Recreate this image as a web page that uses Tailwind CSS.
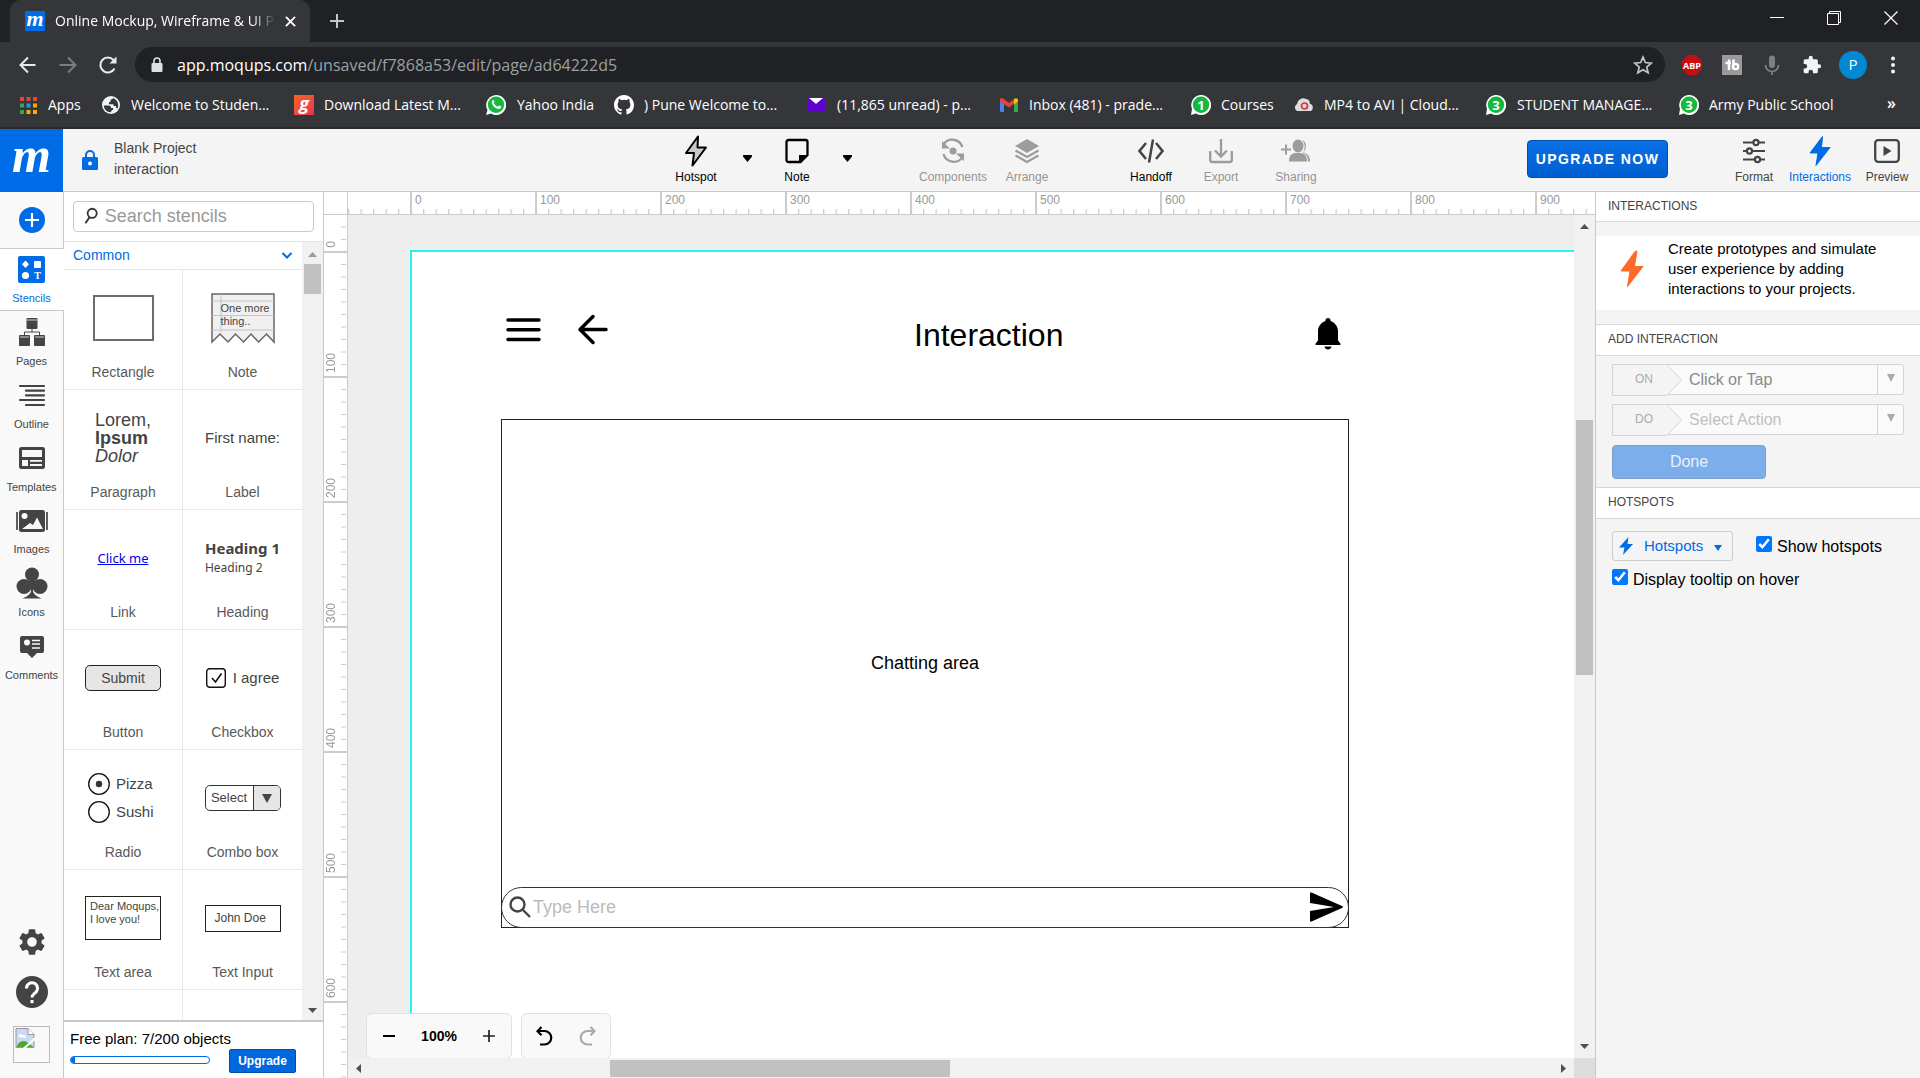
<!DOCTYPE html>
<html lang="en">
<head>
<meta charset="utf-8">
<title>Online Mockup, Wireframe &amp; UI Prototyping Tool</title>
<script src="https://cdn.jsdelivr.net/npm/@tailwindcss/browser@4"></script>
</head>
<body class="flex h-screen flex-col overflow-hidden bg-white font-['Liberation_Sans',Arial,sans-serif] text-[#444]">

<!-- Browser chrome -->
<div class="shrink-0 bg-[#35363a] font-['Open_Sans',sans-serif] text-white">
  <div class="flex h-[42px] bg-[#202124]">
    <div class="ml-[10px] flex w-[300px] items-center rounded-t-[10px] bg-[#35363a] pr-[10px] pl-[15px]">
      <div class="flex size-5 shrink-0 items-center justify-center bg-[#006be6] pb-1 font-['Liberation_Serif',serif] text-[22px] leading-none font-bold italic">m</div>
      <div class="ml-[10px] w-[220px] overflow-hidden text-[14px] leading-5 whitespace-nowrap [mask-image:linear-gradient(90deg,#000_90%,transparent)]">Online Mockup, Wireframe &amp; UI Prototyping</div>
      <button class="ml-auto flex size-5 items-center justify-center" aria-label="Close tab"><svg class="size-[11px]" viewBox="0 0 12 12" stroke="#fff" stroke-width="2"><path d="M1 1l10 10M11 1L1 11"/></svg></button>
    </div>
    <button class="ml-[19px] flex w-4 items-center" aria-label="New tab"><svg class="size-4" viewBox="0 0 16 16" stroke="#c4c5c7" stroke-width="2"><path d="M8 1v14M1 8h14"/></svg></button>
    <div class="ml-auto flex items-center gap-[43px] pr-[22px] pb-[6px]">
      <button aria-label="Minimize"><svg class="size-[14px]" viewBox="0 0 14 14" stroke="#fff"><path d="M0 6.500h14"/></svg></button>
      <button aria-label="Restore"><svg class="size-[14px]" viewBox="0 0 14 14" stroke="#fff" fill="none"><path d="M.5 2.500h11v11H.5zM2.500 2.500V.5h11v11H11.500"/></svg></button>
      <button aria-label="Close"><svg class="size-[14px]" viewBox="0 0 14 14" stroke="#fff" stroke-width="1.200"><path d="M.5.5l13 13M13.500.5l-13 13"/></svg></button>
    </div>
  </div>
  <div class="flex h-[45px] items-center">
    <button class="ml-[18px]" aria-label="Back"><svg class="size-[20px]" viewBox="0 0 20 20" fill="none" stroke="#e8eaed" stroke-width="2"><path d="M17.500 10H3M10 2.500L2.500 10l7.500 7.500"/></svg></button>
    <button class="ml-[20px]" aria-label="Forward"><svg class="size-[20px]" viewBox="0 0 20 20" fill="none" stroke="#7b7c7f" stroke-width="2"><path d="M1.500 10H17M10 2.500l7.500 7.500-7.500 7.500"/></svg></button>
    <button class="ml-[20px]" aria-label="Reload"><svg class="size-[20px]" viewBox="0 0 20 20" fill="none" stroke="#e8eaed" stroke-width="2"><path d="M16.500 13.500A7.500 7.500 0 1 1 15.500 5"/><path d="M18.500 1.500v7h-7z" fill="#e8eaed" stroke="none"/></svg></button>
    <div class="ml-[17px] flex h-[35px] flex-1 items-center rounded-full bg-[#202124] pr-3 pl-4">
      <svg class="h-4 w-3 shrink-0" viewBox="0 0 12 16"><rect x=".5" y="6" width="11" height="9" rx="1" fill="#dfe0e2"/><path d="M3 6.500V4a3 3 0 0 1 6 0v2.500" fill="none" stroke="#dfe0e2" stroke-width="1.600"/></svg>
      <div class="ml-[14px] flex-1 text-[16px] leading-6 whitespace-nowrap">app.moqups.com<span class="text-[#9aa0a6]">/unsaved/f7868a53/edit/page/ad64222d5</span></div>
      <svg class="size-5" viewBox="0 0 24 24" fill="none" stroke="#c4c6c9" stroke-width="2"><path d="M12 2.500l2.800 6.600 7.200.6-5.500 4.700 1.700 7L12 17.700 5.800 21.400l1.700-7L2 9.700l7.200-.6z"/></svg>
    </div>
    <div class="flex items-center gap-5 pr-[21px] pl-[17px]">
      <svg class="size-[20px]" viewBox="0 0 20 20"><path d="M6 0h8l6 6v8l-6 6H6l-6-6V6z" fill="#c70d0d"/><text x="10" y="13.500" font-family="Open Sans" font-size="9" font-weight="700" fill="#fff" text-anchor="middle">ABP</text></svg>
      <svg class="size-5" viewBox="0 0 20 20"><path d="M0 0h20v20H0z" fill="#9a9a9a"/><path d="M7 4.500V15M3.500 8H9M11.500 4.500V14" stroke="#fff" stroke-width="2.500"/><circle cx="13.500" cy="11.500" r="2.700" fill="none" stroke="#fff" stroke-width="2.300"/></svg>
      <svg class="size-5" viewBox="0 0 20 20" fill="none" stroke="#7e7f82"><path d="M10 3.500v6.500" stroke-width="6" stroke-linecap="round"/><path d="M3.500 10a6.500 6.500 0 0 0 13 0M10 16v4" stroke-width="1.700"/></svg>
      <svg class="size-[20px]" viewBox="0 0 24 24" fill="#f1f3f4"><path d="M20.500 11H19V7a2 2 0 0 0-2-2h-4V3.500a2.500 2.500 0 0 0-5 0V5H4a2 2 0 0 0-2 2v3.800h1.500a2.700 2.700 0 0 1 0 5.400H2V20a2 2 0 0 0 2 2h3.800v-1.500a2.700 2.700 0 0 1 5.400 0V22H17a2 2 0 0 0 2-2v-4h1.500a2.500 2.500 0 0 0 0-5z"/></svg>
      <div class="-ml-[3px] flex size-7 items-center justify-center rounded-full bg-[#0288d1] text-[15px]">P</div>
      <svg class="h-5 w-[12px]" viewBox="0 0 12 20" fill="#f1f3f4"><circle cx="6" cy="3.500" r="2"/><circle cx="6" cy="10" r="2"/><circle cx="6" cy="16.500" r="2"/></svg>
    </div>
  </div>
  <nav class="flex h-[42px] items-center border-b-2 border-[#28292c] pb-1 pl-5 text-[14px] leading-5 whitespace-nowrap">
    <a href="#" class="flex w-[82px] shrink-0 items-center gap-[11px]"><svg class="size-[17px] shrink-0" viewBox="0 0 17 17"><path d="M0 0h4v4H0zM6.500 0h4v4h-4zM13 0h4v4h-4z" fill="#ea4335"/><path d="M0 6.500h4v4H0zM0 13h4v4H0z" fill="#34a853"/><path d="M6.500 6.500h4v4h-4z" fill="#2196f3"/><path d="M13 6.500h4v4h-4zM6.500 13h4v4h-4zM13 13h4v4h-4z" fill="#fbaa05"/></svg>Apps</a>
    <a href="#" class="flex w-[192px] shrink-0 items-center gap-[11px]"><svg class="size-[18px] shrink-0" viewBox="0 0 18 18"><circle cx="9" cy="9" r="9" fill="#f1f3f4"/><path d="M1.800 9.500h4.500c2 0 3 1 2.700 2.500H11v2c-1 0-2 .5-2 2.200C5 16.500 2 13.500 1.800 9.500zM11 2c-.5 1-1 1.500-2.500 1.500V6H7v2.200h4.500V10H14v1.500l1.500 1.200C17 10 16.500 4 11 2z" fill="#35363a"/></svg>Welcome to Studen...</a>
    <a href="#" class="flex w-[192px] shrink-0 items-center gap-[10px]"><span class="flex size-5 shrink-0 items-center justify-center bg-linear-to-br from-[#f26522] to-[#e8334a] pb-1 text-[18px] leading-none font-bold italic">g</span>Download Latest M...</a>
    <a href="#" class="flex w-[128px] shrink-0 items-center gap-[11px]"><svg class="size-5 shrink-0" viewBox="0 0 20 20"><path d="M0 20l1.500-5A10 10 0 1 1 5 18.600z" fill="#fff"/><circle cx="10" cy="9.800" r="8.200" fill="#14b83f"/><path d="M6 6c1-2 2-1 2.500.8.2.9-1 1-.5 1.800 1 1.700 2 2.500 3.400 3 .8.300 1-1.200 1.800-1 2 .8 2.500 1.200 1.500 2.600C11 16 4.500 9.500 6 6z" fill="#fff"/></svg>Yahoo India</a>
    <a href="#" class="flex w-[193px] shrink-0 items-center gap-[10px]"><svg class="size-5 shrink-0" viewBox="0 0 16 16" fill="#fff"><path d="M8 0C3.580 0 0 3.580 0 8c0 3.540 2.290 6.530 5.470 7.590.4.070.55-.17.55-.38 0-.19-.01-.82-.01-1.490-2.010.37-2.530-.49-2.690-.94-.09-.23-.48-.94-.82-1.130-.28-.15-.68-.52-.01-.53.63-.01 1.080.58 1.230.82.72 1.210 1.870.87 2.330.66.07-.52.28-.87.51-1.070-1.780-.2-3.640-.89-3.640-3.950 0-.87.31-1.590.82-2.150-.08-.2-.36-1.020.08-2.120 0 0 .67-.21 2.200.82a7.600 7.600 0 0 1 4 0c1.530-1.040 2.200-.82 2.200-.82.44 1.100.16 1.920.08 2.120.51.56.82 1.270.82 2.150 0 3.070-1.870 3.750-3.650 3.950.29.25.54.73.54 1.480 0 1.070-.01 1.930-.01 2.200 0 .21.150.46.55.38A8.010 8.010 0 0 0 16 8c0-4.420-3.580-8-8-8z"/></svg>) Pune Welcome to...</a>
    <a href="#" class="flex w-[193px] shrink-0 items-center gap-[12px]"><svg class="h-[14px] w-[18px] shrink-0" viewBox="0 0 18 14"><rect width="18" height="14" rx="1.500" fill="#6001d2"/><path d="M2 0h14L9 6z" fill="#fff"/></svg>(11,865 unread) - p...</a>
    <a href="#" class="flex w-[191px] shrink-0 items-center gap-[11px]"><svg class="h-[14px] w-[18px] shrink-0" viewBox="0 0 18 14"><path d="M0 2h4v12H1a1 1 0 0 1-1-1z" fill="#4285f4"/><path d="M14 2h4v11a1 1 0 0 1-1 1h-3z" fill="#34a853"/><path d="M0 2C0 0 2-.5 3.500.7L9 5l5.500-4.300L14 5.800 9 9.500 0 3.500z" fill="#ea4335"/><path d="M14 1c2-1.500 4-.7 4 1v1.500l-4 3z" fill="#fbbc04"/></svg>Inbox (481) - prade...</a>
    <a href="#" class="flex w-[104px] shrink-0 items-center gap-[10px]"><svg class="size-5 shrink-0" viewBox="0 0 20 20"><path d="M0 20l1-6A10 10 0 1 1 5 18.600z" fill="#fff"/><circle cx="10" cy="9.800" r="8.200" fill="#14b83f"/><text x="10" y="14.500" font-family="Open Sans" font-size="13" font-weight="700" fill="#fff" text-anchor="middle">1</text></svg>Courses</a>
    <a href="#" class="flex w-[191px] shrink-0 items-center gap-[11px]"><svg class="h-[14px] w-[18px] shrink-0" viewBox="0 0 18 14"><path d="M2 13a4 4 0 0 1 0-7C3 1 8-1 11 1c3 0 4 3 4 5 3 0 4 5 1 7z" fill="#ddd"/><circle cx="9.500" cy="8" r="3" fill="none" stroke="#d33" stroke-width="1.700"/></svg>MP4 to AVI | Cloud...</a>
    <a href="#" class="flex w-[193px] shrink-0 items-center gap-[11px]"><svg class="size-5 shrink-0" viewBox="0 0 20 20"><path d="M0 20l1-6A10 10 0 1 1 5 18.600z" fill="#fff"/><circle cx="10" cy="9.800" r="8.200" fill="#14b83f"/><text x="10" y="14.500" font-family="Open Sans" font-size="13" font-weight="700" fill="#fff" text-anchor="middle">3</text></svg>STUDENT MANAGE...</a>
    <a href="#" class="flex shrink-0 items-center gap-[10px]"><svg class="size-5 shrink-0" viewBox="0 0 20 20"><path d="M0 20l1-6A10 10 0 1 1 5 18.600z" fill="#fff"/><circle cx="10" cy="9.800" r="8.200" fill="#14b83f"/><text x="10" y="14.500" font-family="Open Sans" font-size="13" font-weight="700" fill="#fff" text-anchor="middle">3</text></svg>Army Public School</a>
    <button class="mr-6 ml-auto pb-1 text-[16px] font-semibold" aria-label="More bookmarks">»</button>
  </nav>
</div>

<!-- Application header -->
<header class="flex h-[63px] shrink-0 border-b border-[#c9c9c9] bg-[#f4f4f4] text-[12px] leading-4">
  <div class="flex flex-1">
    <a href="#" class="-mb-px flex w-[63px] items-center justify-center bg-[#006be6] pb-3 font-['Liberation_Serif',serif] text-[50px] leading-none font-bold text-white italic" aria-label="Moqups">m</a>
    <svg class="mt-[21px] ml-[19px] h-[20px] w-4" viewBox="0 0 16 20"><rect y="7" width="16" height="13" rx="1.500" fill="#006be6"/><path d="M4 7.500V5a4 4 0 0 1 8 0v2.500" fill="none" stroke="#006be6" stroke-width="2"/><circle cx="8" cy="13.500" r="2" fill="#fff"/></svg>
    <div class="mt-[9px] ml-[16px] text-[14px] leading-[21px] text-[#444]"><div>Blank Project</div><div>interaction</div></div>
  </div>
  <div class="ml-[73px] flex text-[#949494]">
    <button class="flex w-12 flex-col items-center pt-[6px] text-black"><svg class="h-[32px] w-[24px]" viewBox="0 0 24 32"><path d="M14 1.500L2 18h8L8.500 30.500 22 12.500h-8.500z" fill="#c8c8c8" stroke="#000" stroke-width="2" stroke-linejoin="round"/></svg><span class="mt-[2px]">Hotspot</span></button>
    <button class="ml-[15px] flex w-6 items-center justify-center" aria-label="Hotspot options"><svg class="mb-1 h-[7px] w-[9px]" viewBox="0 0 10 8"><path d="M0 0h10v2L5 8 0 2z"/></svg></button>
    <button class="ml-[14px] flex w-12 flex-col items-center pt-[6px] text-black"><svg class="h-[32px] w-[24px]" viewBox="0 0 24 32"><path d="M3.500 5h17a2 2 0 0 1 2 2v13l-7 7H3.500a2 2 0 0 1-2-2V7a2 2 0 0 1 2-2z" fill="none" stroke="#000" stroke-width="2.300"/><path d="M14 28v-8h9z"/></svg><span class="mt-[2px]">Note</span></button>
    <button class="ml-[14px] flex w-6 items-center justify-center" aria-label="Note options"><svg class="mb-1 h-[7px] w-[9px]" viewBox="0 0 10 8"><path d="M0 0h10v2L5 8 0 2z"/></svg></button>
    <button class="ml-[58px] flex w-[72px] flex-col items-center pt-[6px]"><svg class="h-[32px] w-[24px]" viewBox="0 0 24 32" fill="none" stroke="#9c9c9c" stroke-width="2.300"><circle cx="12" cy="16" r="3.500" fill="#9c9c9c" stroke="none"/><path d="M2.500 9.500C7 2.500 18 3 21.500 12M2.500 19C5 28 17 29.500 21.500 22"/><path d="M1 6v7.500h8zM23 26v-7.500h-8z" fill="#9c9c9c" stroke="none"/></svg><span class="mt-[2px]">Components</span></button>
    <button class="ml-[13px] flex w-[50px] flex-col items-center pt-[6px]"><svg class="h-[32px] w-[24px]" viewBox="0 0 24 32" fill="none" stroke="#9c9c9c" stroke-width="2.300"><path d="M12 4l12 7-12 7L0 11z" fill="#9c9c9c" stroke="none"/><path d="M.5 15.500L12 22l11.500-6.500M.5 20.500L12 27l11.500-6.500"/></svg><span class="mt-[2px]">Arrange</span></button>
    <button class="ml-[74px] flex w-[50px] flex-col items-center pt-[6px] text-black"><svg class="h-[32px] w-[26px]" viewBox="0 0 26 32" fill="none" stroke="#444" stroke-width="2.500"><path d="M8 8l-6.500 8L8 24M18 8l6.500 8-6.500 8M15 4.500l-4 23"/></svg><span class="mt-[2px]">Handoff</span></button>
    <button class="ml-[20px] flex w-[50px] flex-col items-center pt-[6px]"><svg class="h-[32px] w-[24px]" viewBox="0 0 24 32" fill="none" stroke="#9c9c9c" stroke-width="2.300"><path d="M1.200 16v9a2 2 0 0 0 2 2h17.600a2 2 0 0 0 2-2v-9M12 4v17M6 15.500l6 6 6-6"/></svg><span class="mt-[2px]">Export</span></button>
    <button class="ml-[25px] flex w-[50px] flex-col items-center pt-[6px]"><svg class="h-[32px] w-[30px]" viewBox="0 0 30 32" fill="#9c9c9c"><ellipse cx="17" cy="11" rx="5.500" ry="6.500"/><path d="M8 26.500c0-5 1.500-7.500 6-8.500h6c4.500 1 6 3.500 6 8.500z"/><path d="M21 5c5 1 5 10 1 12.500 5 1 7 4 7 9h-2c0-5-1.500-7.500-5.500-8.500 3-3 3-10-.5-13zM4 9.500h2v4h4v2H6v4H4v-4H0v-2h4z"/></svg><span class="mt-[2px]">Sharing</span></button>
  </div>
  <div class="flex flex-1 justify-end">
    <button class="mt-[11px] h-[38px] w-[141px] rounded-[4px] border border-[#004ea8] bg-linear-to-b from-[#0a70e6] to-[#005fd0] text-[14px] font-bold tracking-widest text-white">UPGRADE NOW</button>
    <button class="ml-[61px] flex w-[50px] flex-col items-center pt-[6px]"><svg class="h-[32px] w-[24px]" viewBox="0 0 24 32" fill="#f4f4f4" stroke="#444" stroke-width="2.200"><path d="M1 7.500h22M1 16h22M1 24.500h22"/><circle cx="14" cy="7.500" r="2.600"/><circle cx="7.500" cy="16" r="2.600"/><circle cx="15.500" cy="24.500" r="2.600"/></svg><span class="mt-[2px]">Format</span></button>
    <button class="ml-[8px] flex w-[66px] flex-col items-center pt-[6px] text-[#006be6]"><svg class="h-[32px] w-[24px]" viewBox="0 0 24 32"><path d="M14.500 1.500L2 18h8L8 30.500 22 12.500h-8.500z" fill="#006be6" stroke="#006be6" stroke-linejoin="round"/></svg><span class="mt-[2px]">Interactions</span></button>
    <button class="mr-[8px] ml-[9px] flex w-[50px] flex-col items-center pt-[6px]"><svg class="h-[32px] w-[26px]" viewBox="0 0 26 32"><rect x="1.200" y="5.200" width="23.600" height="21.600" rx="3" fill="none" stroke="#444" stroke-width="2.300"/><path d="M9.500 11l8 5-8 5z" fill="#444"/></svg><span class="mt-[2px]">Preview</span></button>
  </div>
</header>

<main class="flex min-h-0 flex-1">

  <!-- Tool rail -->
  <aside class="flex w-16 shrink-0 flex-col bg-[#f9f9f9] text-[11px] leading-4 text-[#444]">
    <div class="flex h-[56px] items-center justify-center border-r border-[#c9c9c9]"><button class="flex size-[26px] items-center justify-center rounded-full bg-[#006be6]" aria-label="Add"><svg class="size-[14px]" viewBox="0 0 14 14" stroke="#fff" stroke-width="2.200"><path d="M7 0v14M0 7h14"/></svg></button></div>
    <button class="flex h-[63px] flex-col items-center border-y border-[#c9c9c9] bg-white pt-[7px] pr-px text-[#006be6]"><svg class="size-[27px]" viewBox="0 0 27 27"><rect width="27" height="27" rx="2" fill="#006be6"/><path d="M7.500 4.500L11 8.300l-3.500 3.800L4 8.300z" fill="#fff"/><rect x="16" y="5" width="7" height="7" rx="1" fill="#fff"/><circle cx="7.500" cy="19.500" r="3.600" fill="#fff"/><text x="19.500" y="23" font-family="Liberation Serif" font-weight="700" font-size="10" fill="#fff" text-anchor="middle">T</text></svg><span class="mt-[7px]">Stencils</span></button>
    <div class="flex flex-1 flex-col border-r border-[#c9c9c9]">
      <button class="flex h-[63px] flex-col items-center pt-[6px]"><svg class="h-[30px] w-[28px]" viewBox="0 0 28 30" fill="#444"><rect x="8.500" y="1" width="11" height="11" rx="1"/><rect x="1" y="18" width="11" height="11" rx="1"/><rect x="16" y="18" width="11" height="11" rx="1"/><path d="M14 12v3M6.500 18v-3h15v3" fill="none" stroke="#444"/><path d="M9 3h10M2 20h9M17 20h9" stroke="#f9f9f9" stroke-width=".8"/></svg><span class="mt-[6px]">Pages</span></button>
      <button class="flex h-[63px] flex-col items-center pt-[6px]"><svg class="h-[30px] w-[28px]" viewBox="0 0 28 30" stroke="#444" stroke-width="2.200" stroke-linecap="round"><path d="M2 6h24M8 10.700h18M8 15.300h18M2 20h24M8 25h18"/></svg><span class="mt-[6px]">Outline</span></button>
      <button class="flex h-[63px] flex-col items-center pt-[6px]"><svg class="h-[30px] w-[28px]" viewBox="0 0 28 30"><rect x="1" y="4" width="26" height="22" rx="2.500" fill="#444"/><path d="M4 7h20v7H4zM4 17h6v6H4zM12 17h12v1.700H12zM12 21h12v2H12z" fill="#f9f9f9"/></svg><span class="mt-[6px]">Templates</span></button>
      <button class="flex h-[62px] flex-col items-center pt-[6px]"><svg class="h-[30px] w-[32px]" viewBox="0 0 32 30"><rect x="3" y="4" width="26" height="22" rx="2.500" fill="#444"/><path d="M1 6v18M31 6v18" stroke="#444" stroke-width="1.700"/><circle cx="8.500" cy="10" r="3" fill="#f9f9f9"/><path d="M6 23l8-6 3 2 4-7.500L27 23z" fill="#f9f9f9"/></svg><span class="mt-[5px]">Images</span></button>
      <button class="flex h-[63px] flex-col items-center pt-[5px]"><svg class="h-[32px] w-[32px]" viewBox="0 0 32 32" fill="#444"><circle cx="16" cy="7.500" r="7"/><circle cx="8" cy="19.500" r="7.500"/><circle cx="24" cy="19.500" r="7.500"/><path d="M13 11h6l1 9-3 3c0 4 3 6 8.500 8.500h-19C12 29 15 27 15 23l-3-3z"/></svg><span class="mt-[5px]">Icons</span></button>
      <button class="flex h-[63px] flex-col items-center pt-[6px]"><svg class="h-[30px] w-[28px]" viewBox="0 0 28 30"><path d="M4 5h20q2 0 2 2v13q0 2-2 2h-5l-5 5-5-5H4q-2 0-2-2V7q0-2 2-2z" fill="#444"/><circle cx="9" cy="11.500" r="3" fill="#f9f9f9"/><path d="M14 9.500h8M14 13h8M14 17h8" stroke="#f9f9f9" stroke-width="1.500"/></svg><span class="mt-[6px]">Comments</span></button>
      <button class="mt-auto flex h-[50px] items-center justify-center" aria-label="Settings"><svg class="size-8" viewBox="0 0 24 24" fill="#444"><path d="M19.140 12.940c.04-.3.060-.61.060-.94s-.02-.64-.07-.94l2.030-1.580a.49.490 0 0 0 .12-.61l-1.920-3.320a.49.490 0 0 0-.59-.22l-2.390.96c-.5-.38-1.030-.7-1.620-.94l-.36-2.540a.48.480 0 0 0-.48-.41h-3.840c-.24 0-.43.170-.47.410l-.36 2.540c-.59.240-1.130.57-1.620.94l-2.390-.96c-.22-.08-.47 0-.59.220L2.740 8.870c-.12.210-.08.470.12.610l2.030 1.580c-.05.3-.09.63-.09.940s.02.640.070.940l-2.030 1.580a.49.490 0 0 0-.12.610l1.920 3.320c.12.220.37.290.59.220l2.390-.96c.5.380 1.030.7 1.620.94l.36 2.540c.05.240.24.410.48.410h3.840c.24 0 .44-.17.470-.41l.36-2.540c.59-.24 1.130-.56 1.620-.94l2.390.96c.22.080.47 0 .59-.22l1.920-3.320c.12-.22.070-.47-.12-.61zM12 15.600A3.600 3.600 0 1 1 12 8.400a3.600 3.600 0 0 1 0 7.200z"/></svg></button>
      <button class="flex h-[50px] items-center justify-center" aria-label="Help"><svg class="size-8" viewBox="0 0 32 32"><circle cx="16" cy="16" r="16" fill="#444"/><path d="M10.500 12.500a5.500 5.500 0 1 1 9 4c-2 1.800-3.500 2.500-3.500 5" fill="none" stroke="#fff" stroke-width="3"/><path d="M14.500 24h3v3.200h-3z" fill="#fff"/></svg></button>
      <div class="mx-auto mt-[9px] mb-[15px] size-[37px] border border-[#bcbcbc] p-px"><svg class="size-5" viewBox="0 0 20 20"><path d="M1 .5h12l6 6v13H1z" fill="#c9daf6" stroke="#999"/><path d="M13 .5v6h6" fill="#fff" stroke="#999"/><path d="M3 9a3 3 0 0 1 5-2 2.500 2.500 0 0 1 3 3z" fill="#fff"/><path d="M1.500 19c2-7 9-8 13-3l4 3z" fill="#4ea92d"/><path d="M8 20L20 9v3l-9 8z" fill="#fff"/></svg></div>
    </div>
  </aside>

  <!-- Stencil library -->
  <section class="flex w-[260px] shrink-0 flex-col border-r border-[#c9c9c9] bg-white">
    <div class="border-b border-[#e6e6e6] px-[9px] pt-[9px] pb-[9px]">
      <label class="flex h-[31px] items-center rounded-[4px] border border-[#c9c9c9] pb-px pl-[10px]">
        <svg class="h-[18px] w-[15px]" viewBox="0 0 15 18" fill="none" stroke="#333" stroke-width="2"><circle cx="9" cy="6" r="5"/><path d="M6 10.500L1.500 17"/></svg>
        <input type="search" aria-label="Search stencils" placeholder="Search stencils" class="ml-[7px] w-full bg-transparent text-[18px] leading-6 outline-none placeholder:text-[#999]">
      </label>
    </div>
    <div class="flex min-h-0 flex-1">
      <div class="min-h-0 flex-1 overflow-hidden text-[14px] leading-5 text-[#595959]">
        <button class="flex h-[28px] w-full items-center justify-between border-b border-[#e6e6e6] pr-[10px] pb-px pl-[9px] text-[#006be6]">Common<svg class="h-[7px] w-[10px]" viewBox="0 0 10 7" fill="none" stroke="#006be6" stroke-width="2"><path d="M.5 1L5 5.500 9.500 1"/></svg></button>
        <div class="grid auto-rows-[120px] grid-cols-2 text-center text-[#595959]">
          <div class="flex flex-col border-r border-b border-[#e8e8e8]"><div class="flex h-[92px] items-center justify-center pt-1"><div class="h-[46px] w-[61px] border-2 border-[#6c6c6c]"></div></div>Rectangle</div>
          <div class="flex flex-col border-b border-[#e8e8e8]"><div class="flex h-[92px] items-center justify-center pt-1"><div class="grid h-[51px] w-[64px]"><svg class="col-start-1 row-start-1 h-[51px] w-[64px]" viewBox="0 0 64 51" fill="none"><path d="M1 1h62v48l-7.500-8-8 8-7.500-8-7.500 8-8-8-7.500 8-8-8L1 49z" fill="#f0f0f0" stroke="#666" stroke-width="1.500"/><path d="M1 8h62M1 22.500h62M1 37h62M10 1v38" stroke="#c4c4c4"/></svg><div class="col-start-1 row-start-1 pt-[9px] pl-[10px] text-left text-[11px] leading-[13px] text-[#444]">One more thing..</div></div></div>Note</div>
          <div class="flex flex-col border-r border-b border-[#e8e8e8]"><div class="flex h-[92px] items-center justify-center pt-1"><div class="text-left text-[18px] leading-[18px] text-[#444]">Lorem,<br><b>Ipsum</b><br><i>Dolor</i></div></div>Paragraph</div>
          <div class="flex flex-col border-b border-[#e8e8e8]"><div class="flex h-[92px] items-center justify-center pt-1 text-[15px] text-[#444]">First name:</div>Label</div>
          <div class="flex flex-col border-r border-b border-[#e8e8e8]"><div class="flex h-[92px] items-center justify-center pt-1"><span class="font-['Noto_Sans',sans-serif] text-[13px] text-[#0000ee] underline">Click me</span></div>Link</div>
          <div class="flex flex-col border-b border-[#e8e8e8]"><div class="flex h-[92px] items-center justify-center pt-1"><div class="text-left font-['Noto_Sans',sans-serif] text-[12px] text-[#444]"><div class="text-[15px] font-bold">Heading 1</div>Heading 2</div></div>Heading</div>
          <div class="flex flex-col border-r border-b border-[#e8e8e8]"><div class="flex h-[92px] items-center justify-center pt-1"><div class="h-[26px] w-[76px] rounded-[5px] border border-[#222] bg-[#e6e6e6] text-[14px] leading-6 text-[#444]">Submit</div></div>Button</div>
          <div class="flex flex-col border-b border-[#e8e8e8]"><div class="flex h-[92px] items-center justify-center gap-[7px] pt-1 text-[15px] text-[#444]"><svg class="size-5" viewBox="0 0 20 20" fill="none" stroke="#111"><rect x=".7" y=".7" width="18.600" height="18.600" rx="3" stroke-width="1.400"/><path d="M6 10l3.500 4L15.500 5.500" stroke-width="1.600"/></svg>I agree</div>Checkbox</div>
          <div class="flex flex-col border-r border-b border-[#e8e8e8]"><div class="flex h-[92px] flex-col items-center justify-center gap-[6px] pt-1 text-[15px] leading-[22px] text-[#444]"><div class="flex w-[70px] items-center gap-[6px]"><svg class="size-[22px]" viewBox="0 0 22 22"><circle cx="11" cy="11" r="10.300" fill="none" stroke="#111" stroke-width="1.300"/><circle cx="11" cy="11" r="3.200" fill="#333"/></svg>Pizza</div><div class="flex w-[70px] items-center gap-[6px]"><svg class="size-[22px]" viewBox="0 0 22 22"><circle cx="11" cy="11" r="10.300" fill="none" stroke="#111" stroke-width="1.300"/></svg>Sushi</div></div>Radio</div>
          <div class="flex flex-col border-b border-[#e8e8e8]"><div class="flex h-[92px] items-center justify-center pt-1"><div class="flex h-[26px] w-[76px] overflow-hidden rounded-[5px] border border-[#333] text-[13px] leading-6 text-[#444]"><span class="flex-1">Select</span><span class="flex w-[27px] items-center justify-center border-l border-[#333] bg-[#e6e6e6]"><svg class="h-[9px] w-[10px]" viewBox="0 0 10 9" fill="#444"><path d="M0 0h10L5 9z"/></svg></span></div></div>Combo box</div>
          <div class="flex flex-col border-r border-b border-[#e8e8e8]"><div class="flex h-[92px] items-center justify-center pt-1"><div class="h-[44px] w-[76px] border border-[#222] pt-[3px] pl-[4px] text-left text-[11px] leading-[13px] whitespace-nowrap text-[#444]">Dear Moqups,<br>I love you!</div></div>Text area</div>
          <div class="flex flex-col border-b border-[#e8e8e8]"><div class="flex h-[92px] items-center justify-center pt-1"><div class="h-[27px] w-[76px] border border-[#222] pl-[9px] text-left text-[12px] leading-[25px] text-[#444]">John Doe</div></div>Text Input</div>
          <div class="border-r border-[#e8e8e8]"></div><div></div>
        </div>
      </div>
      <div class="flex w-[21px] shrink-0 flex-col items-center bg-[#f1f1f1] pt-[10px] pb-[7px]">
        <svg class="h-[5px] w-[9px]" viewBox="0 0 9 5" fill="#9b9b9b"><path d="M0 5L4.500 0 9 5z"/></svg>
        <div class="mt-[7px] h-[30px] w-[17px] bg-[#c1c1c1]"></div>
        <svg class="mt-auto h-[5px] w-[9px]" viewBox="0 0 9 5" fill="#505050"><path d="M0 0h9L4.500 5z"/></svg>
      </div>
    </div>
    <div class="h-[58px] shrink-0 border-t-2 border-[#c9c9c9] pl-[6px] text-black">
      <div id="plan-label" class="pt-[7px] text-[15px] leading-5">Free plan: 7/200 objects</div>
      <div class="flex items-start">
        <div role="progressbar" aria-labelledby="plan-label" aria-valuenow="7" aria-valuemax="200" class="mt-[7px] h-[8px] w-[140px] overflow-hidden rounded-full border border-[#006be6]"><div class="h-full w-[4px] bg-[#006be6]"></div></div>
        <button class="ml-[19px] h-[24px] w-[67px] rounded-[2px] border border-[#004ea8] bg-[#0068dc] text-[12px] font-bold text-white">Upgrade</button>
      </div>
    </div>
  </section>

  <!-- Rulers and canvas -->
  <section class="flex min-w-0 flex-1 flex-col text-[12px] text-[#999]">
    <div class="flex h-[23px] shrink-0 border-b border-[#ccc] bg-white">
      <div class="w-[24px] shrink-0 border-r border-[#ccc]"></div>
      <div class="grid min-w-0 flex-1 overflow-hidden">
        <svg class="col-start-1 row-start-1 h-[22px] w-full"><defs><pattern id="tick-x" width="12.500" height="22" patternUnits="userSpaceOnUse"><path d="M0 17h1.300v5H0z" fill="#ccc"/></pattern></defs><rect width="100%" height="22" fill="url(#tick-x)"/></svg>
        <div class="col-start-1 row-start-1 ml-[62px] flex h-[22px] overflow-hidden leading-4">
          <span class="w-[125px] shrink-0 border-l-2 border-[#ccc] pl-[3px]">0</span><span class="w-[125px] shrink-0 border-l-2 border-[#ccc] pl-[3px]">100</span><span class="w-[125px] shrink-0 border-l-2 border-[#ccc] pl-[3px]">200</span><span class="w-[125px] shrink-0 border-l-2 border-[#ccc] pl-[3px]">300</span><span class="w-[125px] shrink-0 border-l-2 border-[#ccc] pl-[3px]">400</span><span class="w-[125px] shrink-0 border-l-2 border-[#ccc] pl-[3px]">500</span><span class="w-[125px] shrink-0 border-l-2 border-[#ccc] pl-[3px]">600</span><span class="w-[125px] shrink-0 border-l-2 border-[#ccc] pl-[3px]">700</span><span class="w-[125px] shrink-0 border-l-2 border-[#ccc] pl-[3px]">800</span><span class="w-[125px] shrink-0 border-l-2 border-[#ccc] pl-[3px]">900</span>
        </div>
      </div>
    </div>
    <div class="flex min-h-0 flex-1">
      <div class="grid w-[24px] shrink-0 grid-rows-[minmax(0,1fr)] overflow-hidden border-r border-[#ccc] bg-white">
        <svg class="col-start-1 row-start-1 h-full w-[23px]"><defs><pattern id="tick-y" width="23" height="12.500" patternUnits="userSpaceOnUse"><path d="M17 11.500h5v1.300h-5z" fill="#ccc"/></pattern></defs><rect width="23" height="100%" fill="url(#tick-y)"/></svg>
        <div class="col-start-1 row-start-1 flex flex-col overflow-hidden leading-[15px]">
          <div class="flex h-[38px] shrink-0 items-end border-b-2 border-[#ccc] pb-[3px]"><span class="rotate-180 [writing-mode:vertical-rl]">0</span></div>
          <div class="flex h-[125px] shrink-0 items-end border-b-2 border-[#ccc] pb-[3px]"><span class="rotate-180 [writing-mode:vertical-rl]">100</span></div>
          <div class="flex h-[125px] shrink-0 items-end border-b-2 border-[#ccc] pb-[3px]"><span class="rotate-180 [writing-mode:vertical-rl]">200</span></div>
          <div class="flex h-[125px] shrink-0 items-end border-b-2 border-[#ccc] pb-[3px]"><span class="rotate-180 [writing-mode:vertical-rl]">300</span></div>
          <div class="flex h-[125px] shrink-0 items-end border-b-2 border-[#ccc] pb-[3px]"><span class="rotate-180 [writing-mode:vertical-rl]">400</span></div>
          <div class="flex h-[125px] shrink-0 items-end border-b-2 border-[#ccc] pb-[3px]"><span class="rotate-180 [writing-mode:vertical-rl]">500</span></div>
          <div class="flex h-[125px] shrink-0 items-end border-b-2 border-[#ccc] pb-[3px]"><span class="rotate-180 [writing-mode:vertical-rl]">600</span></div>
        </div>
      </div>
      <div class="flex min-w-0 flex-1 flex-col">
        <div class="flex min-h-0 flex-1">
          <div class="relative min-w-0 flex-1 overflow-hidden bg-[#eee] pt-[35px] pl-[62px] text-black">
            <div class="relative h-full border-t-2 border-l-2 border-[#22f3f3] bg-white">
              <svg class="absolute top-[65px] left-[94px] h-[26px] w-[35px]" viewBox="0 0 35 26" stroke="#000" stroke-width="3.500" stroke-linecap="round"><path d="M2 3h31M2 12.700h31M2 22.400h31"/></svg>
              <svg class="absolute top-[62px] left-[165px] h-[32px] w-[32px]" viewBox="0 0 32 32" fill="none" stroke="#000" stroke-width="3.500" stroke-linecap="round" stroke-linejoin="round"><path d="M29 15.500H3M16 2.500L3 15.500l13 13"/></svg>
              <h1 class="absolute top-[63px] left-[502px] text-[32px] leading-10 whitespace-nowrap">Interaction</h1>
              <svg class="absolute top-[66px] left-[903px] h-[32px] w-[26px]" viewBox="0 0 26 32"><path d="M13 0q2.500 0 2.600 3C20 4.500 23 8.500 23 13v9.500l2.500 3.300q.3 1.200-.7 1.200H1.200q-1 0-.7-1.200L3 22.500V13c0-4.500 3-8.500 7.400-10Q10.500 0 13 0zM9.500 28.500h7c-.5 4-6.500 4-7 0z"/></svg>
              <div class="absolute top-[167px] left-[89px] flex h-[509px] w-[848px] flex-col border border-[#222]">
                <div class="flex flex-1 items-center justify-center pt-[18px] text-[18px] leading-6">Chatting area</div>
                <label class="-mx-px -mb-px flex h-[41px] items-center rounded-full border border-[#333] pr-[5px] pb-px pl-[7px]">
                  <svg class="size-[22px] shrink-0" viewBox="0 0 22 22" fill="none" stroke="#444" stroke-width="2.400"><circle cx="8.500" cy="8.500" r="7"/><path d="M13.500 13.500l7.500 7.500"/></svg>
                  <input type="text" aria-label="Message" placeholder="Type Here" class="ml-[2px] min-w-0 flex-1 bg-transparent text-[18px] leading-6 outline-none placeholder:text-[#bbb]">
                  <svg class="h-[30px] w-[33px]" viewBox="0 0 33 30"><path d="M0 1.500Q0 0 1.500.5L32 14q2 1 0 2L1.500 29.500Q0 30 0 28.500V19l24-4L0 11z"/></svg>
                </label>
              </div>
            </div>
            <div class="absolute -bottom-px left-[18px] flex gap-[9px]">
              <div class="flex h-[46px] w-[146px] items-center justify-between rounded-[6px] border border-[#e0e0e0] bg-[#f9f9f9] px-4 text-[14px] font-bold">
                <button aria-label="Zoom out"><svg class="size-[12px]" viewBox="0 0 12 12" stroke="#000" stroke-width="2"><path d="M0 6h12"/></svg></button>100%<button aria-label="Zoom in"><svg class="size-[12px]" viewBox="0 0 12 12" stroke="#222" stroke-width="1.700"><path d="M0 6h12M6 0v12"/></svg></button>
              </div>
              <div class="flex h-[46px] w-[90px] items-center justify-between rounded-[6px] border border-[#e0e0e0] bg-[#f9f9f9] px-[14px]">
                <button aria-label="Undo"><svg class="h-[20px] w-[17px]" viewBox="0 0 17 20" fill="none" stroke="#000" stroke-width="2.200"><path d="M5.500 1L1.500 5.200l4 4M2 5h6.500a6.500 6.500 0 0 1 0 13.500H4"/></svg></button>
                <button aria-label="Redo"><svg class="h-[20px] w-[17px]" viewBox="0 0 17 20" fill="none" stroke="#aaa" stroke-width="2.200"><path d="M11.500 1l4 4.200-4 4M15 5H8.500a6.500 6.500 0 0 0 0 13.500H13"/></svg></button>
              </div>
            </div>
          </div>
          <div class="flex w-[21px] shrink-0 flex-col items-center bg-[#f1f1f1] pt-[9px] pb-[9px]">
            <svg class="h-[5px] w-[9px]" viewBox="0 0 9 5" fill="#505050"><path d="M0 5L4.500 0 9 5z"/></svg>
            <div class="mt-[191px] h-[255px] w-[17px] bg-[#c1c1c1]"></div>
            <svg class="mt-auto h-[5px] w-[9px]" viewBox="0 0 9 5" fill="#505050"><path d="M0 0h9L4.500 5z"/></svg>
          </div>
        </div>
        <div class="flex h-5 shrink-0 bg-[#f1f1f1]">
          <div class="flex flex-1 items-center px-[8px]">
            <svg class="h-[9px] w-[5px]" viewBox="0 0 5 9" fill="#505050"><path d="M5 0v9L0 4.500z"/></svg>
            <div class="ml-[249px] h-[17px] w-[340px] bg-[#c1c1c1]"></div>
            <svg class="ml-auto h-[9px] w-[5px]" viewBox="0 0 5 9" fill="#505050"><path d="M0 0v9l5-4.500z"/></svg>
          </div>
          <div class="w-[21px] bg-[#dcdcdc]"></div>
        </div>
      </div>
    </div>
  </section>

  <!-- Interactions panel -->
  <aside class="w-[325px] shrink-0 border-l border-[#c9c9c9] bg-[#f4f4f4] text-[12px] text-[#444]">
    <h2 class="h-[30px] border-b border-[#d8d8d8] bg-white pl-[12px] leading-7">INTERACTIONS</h2>
    <div class="mt-[14px] flex h-[74px] bg-white pt-[3px] pl-[24px]">
      <svg class="mt-[11px] h-[38px] w-[24px]" viewBox="0 0 24 38"><path d="M15 1.500L1 21h9L7.500 36.500 23 16.500h-8.500L17 1z" fill="#ff6a28" stroke="#ff6a28" stroke-linejoin="round"/></svg>
      <p class="ml-[24px] text-[15px] leading-5 text-black">Create prototypes and simulate<br>user experience by adding<br>interactions to your projects.</p>
    </div>
    <h2 class="mt-[14px] h-[32px] border-y border-[#d8d8d8] bg-white pl-[12px] leading-7">ADD INTERACTION</h2>
    <div class="flex h-[131px] flex-col items-start pt-[8px] pl-[16px]">
      <div class="grid w-[292px] grid-cols-1">
        <select disabled aria-label="On" class="col-start-1 row-start-1 h-[31px] w-full appearance-none rounded-[3px] border border-[#d4d4d4] bg-[#fafafa] pl-[76px] text-[16px] text-[#8a8a8a] opacity-100"><option>Click or Tap</option></select>
        <div class="pointer-events-none col-start-1 row-start-1 flex h-[32px] items-start justify-between">
          <div class="grid"><svg class="col-start-1 row-start-1 h-[32px] w-[71px]" viewBox="0 0 71 32"><path d="M.5.5h54L69.500 16l-15 15.500H.5z" fill="#f4f4f4" stroke="#d4d4d4"/></svg><span class="col-start-1 row-start-1 pl-[23px] leading-[30px] text-[#aaa]">ON</span></div>
          <div class="flex h-[31px] w-[27px] justify-center border-l border-[#d4d4d4] pt-[10px]"><svg class="h-[8px] w-[8px]" viewBox="0 0 8 8" fill="#aaa"><path d="M0 0h8L4 8z"/></svg></div>
        </div>
      </div>
      <div class="mt-[8px] grid w-[292px] grid-cols-1">
        <select disabled aria-label="Do" class="col-start-1 row-start-1 h-[31px] w-full appearance-none rounded-[3px] border border-[#d4d4d4] bg-[#fafafa] pl-[76px] text-[16px] text-[#c0c0c0] opacity-100"><option>Select Action</option></select>
        <div class="pointer-events-none col-start-1 row-start-1 flex h-[32px] items-start justify-between">
          <div class="grid"><svg class="col-start-1 row-start-1 h-[32px] w-[71px]" viewBox="0 0 71 32"><path d="M.5.5h54L69.500 16l-15 15.500H.5z" fill="#f4f4f4" stroke="#d4d4d4"/></svg><span class="col-start-1 row-start-1 pl-[23px] leading-[30px] text-[#aaa]">DO</span></div>
          <div class="flex h-[31px] w-[27px] justify-center border-l border-[#d4d4d4] pt-[10px]"><svg class="h-[8px] w-[8px]" viewBox="0 0 8 8" fill="#aaa"><path d="M0 0h8L4 8z"/></svg></div>
        </div>
      </div>
      <button class="mt-[9px] h-[34px] w-[154px] rounded-[4px] border border-[#7d9fcc] bg-[#7caeec] text-[16px] text-[#e9f1fb]">Done</button>
    </div>
    <h2 class="h-[32px] border-y border-[#d8d8d8] bg-white pl-[12px] leading-7">HOTSPOTS</h2>
    <div class="pt-[12px] pl-[16px] text-[16px] leading-5 text-black">
      <div class="flex">
        <button class="flex h-[30px] w-[121px] items-center rounded-[3px] border border-[#ccc] pl-[6px] text-[15px] text-[#006be6]"><svg class="h-[18px] w-[14px]" viewBox="0 0 14 18"><path d="M9.500 0L0 10.500h5.500L4 18l10-11H8.500z" fill="#006be6"/></svg><span class="ml-[11px]">Hotspots</span><svg class="mt-1 ml-[11px] h-[6px] w-[8px]" viewBox="0 0 8 6" fill="#006be6"><path d="M0 0h8L4 6z"/></svg></button>
        <label class="ml-[23px] flex h-[30px] items-center pt-px"><input type="checkbox" checked class="mr-[5px] mb-[5px] size-4 accent-[#0075ff]">Show hotspots</label>
      </div>
      <label class="mt-[3px] flex h-[30px] items-center pt-px"><input type="checkbox" checked class="mr-[5px] mb-[5px] size-4 accent-[#0075ff]">Display tooltip on hover</label>
    </div>
  </aside>
</main>
</body>
</html>
